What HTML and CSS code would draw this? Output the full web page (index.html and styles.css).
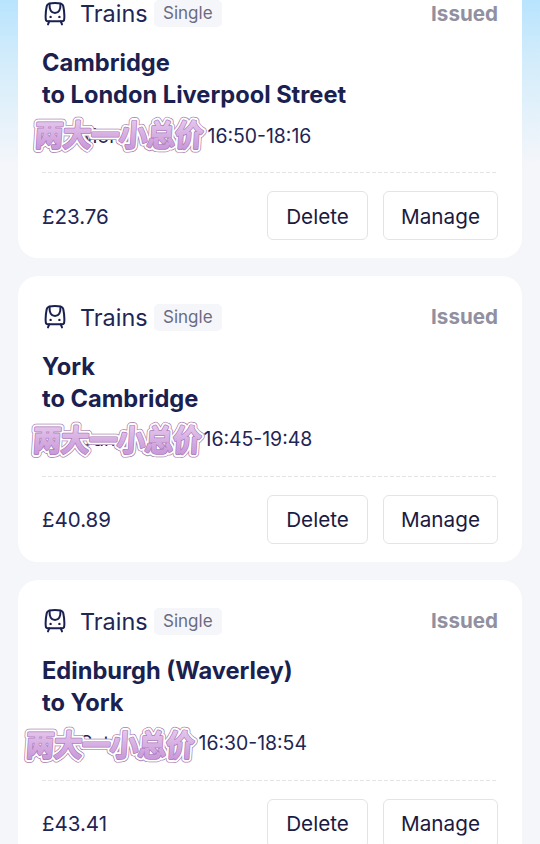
FILE: index.html
```
<!DOCTYPE html>
<html lang="en">
  <head>
    <meta charset="UTF-8">
    <title>My bookings</title>
    <link rel="stylesheet" href="styles.css">
  </head>
  <body>
    <svg class="defs" width="0" height="0">
      <defs>
        <linearGradient id="lilac" x1="0" y1="0" x2="0" y2="1">
          <stop offset="0.2" stop-color="#e4c6ec" />
          <stop offset="0.9" stop-color="#c896d8" />
        </linearGradient>
        <symbol id="train" viewBox="0 0 24 24">
          <path d="M6 1.6Q12 .4 18 1.6Q19.9 2.1 20.3 4.2Q21.8 11.5 21.2 17.4Q21 19.2 19.2 19.2H4.8Q3 19.2 2.8 17.4Q2.2 11.5 3.7 4.2Q4.1 2.1 6 1.6Z" />
          <path d="M6.5 2Q6.3 11 12 11Q17.7 11 17.5 2" />
          <path d="M6.2 19.4L5 22.4M17.8 19.4L19 22.4" />
          <path class="lamp" d="M7.6 14.9h.01M16.4 14.9h.01" />
        </symbol>
        <text id="tag" x="5" y="29">两大一小总价</text>
      </defs>
    </svg>
    <div class="list">
      <div class="card">
        <div class="head">
          <svg class="icon"><use href="#train" /></svg>
          <span class="type">Trains</span>
          <span class="badge">Single</span>
          <span class="status">Issued</span>
        </div>
        <div class="title">Cambridge<br>to London Liverpool Street</div>
        <div class="time">
          <span class="date date-1">Mon, 7</span>
          <span>16:50-18:16</span>
          <svg class="sticker sticker-1">
            <use class="rim" href="#tag" />
            <use class="halo" href="#tag" />
            <use class="edge" href="#tag" />
            <text class="fill" x="5" y="29">两大一小总价</text>
          </svg>
        </div>
        <div class="foot">
          <span class="price">£23.76</span>
          <button type="button" class="delete">Delete</button>
          <button type="button" class="manage">Manage</button>
        </div>
      </div>
      <div class="card">
        <div class="head">
          <svg class="icon"><use href="#train" /></svg>
          <span class="type">Trains</span>
          <span class="badge">Single</span>
          <span class="status">Issued</span>
        </div>
        <div class="title">York<br>to Cambridge</div>
        <div class="time">
          <span class="date date-2">Sun, 6</span>
          <span>16:45-19:48</span>
          <svg class="sticker sticker-2">
            <use class="rim" href="#tag" />
            <use class="halo" href="#tag" />
            <use class="edge" href="#tag" />
            <text class="fill" x="5" y="29">两大一小总价</text>
          </svg>
        </div>
        <div class="foot">
          <span class="price">£40.89</span>
          <button type="button" class="delete">Delete</button>
          <button type="button" class="manage">Manage</button>
        </div>
      </div>
      <div class="card">
        <div class="head">
          <svg class="icon"><use href="#train" /></svg>
          <span class="type">Trains</span>
          <span class="badge">Single</span>
          <span class="status">Issued</span>
        </div>
        <div class="title">Edinburgh (Waverley)<br>to York</div>
        <div class="time">
          <span class="date date-3">Sat, 5</span>
          <span>16:30-18:54</span>
          <svg class="sticker sticker-3">
            <use class="rim" href="#tag" />
            <use class="halo" href="#tag" />
            <use class="edge" href="#tag" />
            <text class="fill" x="5" y="29">两大一小总价</text>
          </svg>
        </div>
        <div class="foot">
          <span class="price">£43.41</span>
          <button type="button" class="delete">Delete</button>
          <button type="button" class="manage">Manage</button>
        </div>
      </div>
    </div>
  </body>
</html>
```
FILE: styles.css
```
* {
  box-sizing: border-box;
}
body {
  margin: 0;
  height: 844px;
  overflow: hidden;
  font-family: Inter, 'Liberation Sans', sans-serif;
  color: #1f2554;
  background: linear-gradient(#b8e4fe 0, #d3ecfb 60px, #f4f6fa 165px) #f4f6fa;
}
.defs {
  position: absolute;
}
.list {
  display: flex;
  flex-direction: column;
  gap: 18px;
  margin-top: -28px;
  padding: 0 18px;
}
.card {
  flex: none;
  height: 285.8px;
  padding: 24.5px 24px 0;
  background: #fff;
  border-radius: 20px;
}
.head {
  display: flex;
  align-items: center;
  height: 34px;
}
.icon {
  width: 24px;
  height: 24px;
  margin-left: 1px;
  fill: none;
  stroke: #1a2150;
  stroke-width: 2;
  stroke-linecap: round;
  stroke-linejoin: round;
}
.lamp {
  stroke-width: 2.4;
}
.type {
  margin-left: 13px;
  font-size: 23.4px;
}
.badge {
  margin-left: 6.5px;
  padding: 0 9px;
  height: 27px;
  line-height: 27px;
  font-size: 17px;
  color: #6a6b82;
  background: #f5f6fa;
  border-radius: 5px;
}
.status {
  margin-left: auto;
  margin-bottom: 1px;
  font-size: 20.6px;
  font-weight: 700;
  color: #9190a0;
}
.title {
  margin-top: 16.5px;
  font-size: 23.65px;
  font-weight: 700;
  line-height: 32px;
  color: #1a2150;
}
.time {
  position: relative;
  display: flex;
  align-items: center;
  height: 40px;
  margin-top: 4.5px;
  font-size: 19.4px;
}
.date {
  padding-left: 38px;
  white-space: nowrap;
}
.date-1 {
  width: 165.5px;
}
.date-2 {
  width: 161.5px;
}
.date-3 {
  width: 156.5px;
}
.sticker {
  position: absolute;
  width: 182px;
  height: 42px;
  overflow: visible;
  font-family: 'Noto Sans CJK SC', sans-serif;
  font-size: 28px;
  font-weight: 500;
  stroke-linejoin: round;
  transform: scaleY(1.06) skewX(-4deg);
}
.sticker-1 {
  top: 1px;
  left: -12px;
}
.sticker-2 {
  top: 3px;
  left: -14px;
}
.sticker-3 {
  top: 4px;
  left: -21px;
}
.rim {
  fill: #a77bab;
  stroke: #a77bab;
  stroke-width: 7.8;
}
.halo {
  fill: #fff;
  stroke: #fff;
  stroke-width: 6.4;
}
.edge {
  fill: #a87ab6;
  stroke: #a87ab6;
  stroke-width: 2.8;
}
.fill {
  fill: url(#lilac);
  stroke: url(#lilac);
  stroke-width: 1.5;
}
.foot {
  display: flex;
  align-items: center;
  margin-top: 16.5px;
  padding-top: 19px;
  background: repeating-linear-gradient(90deg, #e4e4e6 0 4px, transparent 4px 6px) top / 100% 1px no-repeat;
}
.price {
  margin-right: auto;
  padding-top: 1px;
  font-size: 20.5px;
}
button {
  height: 49px;
  padding: 1px 0 0;
  font-family: inherit;
  font-size: 20.7px;
  color: #1b1a40;
  background: #fff;
  border: 1px solid #e4e4e6;
  border-radius: 6px;
}
.delete {
  width: 101px;
  margin-right: 15px;
}
.manage {
  width: 115px;
}
```
